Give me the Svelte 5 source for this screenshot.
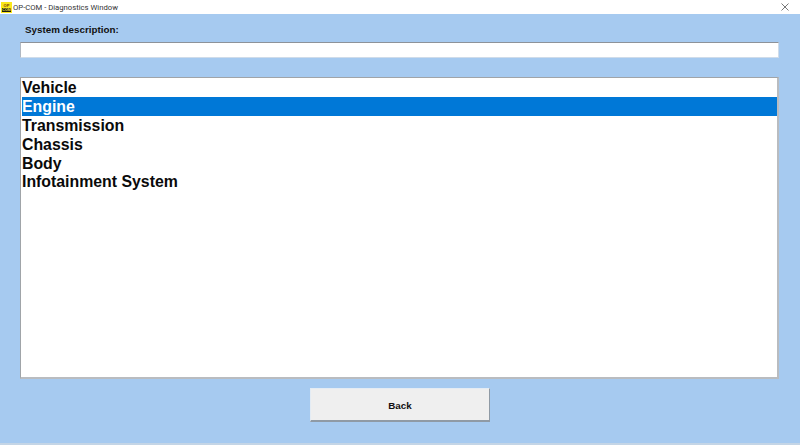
<script>
  let systems = ['Vehicle', 'Engine', 'Transmission', 'Chassis', 'Body', 'Infotainment System'];
  let selected = $state(1);
</script>

<div class="window">
  <header class="titlebar">
    <svg class="logo" width="11" height="11" viewBox="0 0 11 11">
      <rect width="11" height="11" fill="#fbe81a" />
      <rect x="1" y="6" width="9" height="4" fill="#1c1c10" />
      <text x="5.5" y="5" text-anchor="middle" class="logo-op">OP</text>
      <text x="5.5" y="9.4" text-anchor="middle" class="logo-com">COM</text>
    </svg>
    <span class="title">OP-COM - Diagnostics Window</span>
    <svg class="close" width="8" height="8" viewBox="0 0 8 8">
      <path d="M0.5 0.5 L7.5 7.5 M7.5 0.5 L0.5 7.5" stroke="#555" stroke-width="0.8" fill="none" />
    </svg>
  </header>

  <main class="content">
    <label class="desc-label" for="desc">System description:</label>
    <input id="desc" class="desc" type="text" />

    <ul class="list">
      {#each systems as name, i}
        <!-- svelte-ignore a11y_click_events_have_key_events, a11y_no_noninteractive_element_interactions -->
        <li class:selected={i === selected} onclick={() => (selected = i)}>{name}</li>
      {/each}
    </ul>

    <div class="actions">
      <button class="back">Back</button>
    </div>
  </main>
</div>

<style>
  :global(body) {
    margin: 0;
    background: #a6caf0;
  }
  .window {
    width: 800px;
    height: 445px;
    display: flex;
    flex-direction: column;
    overflow: hidden;
    font-family: "Liberation Sans", Arial, sans-serif;
  }
  .titlebar {
    height: 14px;
    flex: none;
    background: #fff;
    display: flex;
    align-items: center;
    padding: 0 11px 0 1px;
  }
  .logo {
    flex: none;
    margin-top: 1px;
  }
  .logo-op {
    font: bold 4px "Liberation Sans", sans-serif;
    fill: #7a3a10;
  }
  .logo-com {
    font: bold 3.6px "Liberation Sans", sans-serif;
    fill: #f0e040;
  }
  .title {
    margin-left: 1px;
    font: 7.7px Roboto, sans-serif;
    color: #333;
  }
  .close {
    margin-left: auto;
  }
  .content {
    flex: 1;
    display: flex;
    flex-direction: column;
    padding: 0 21px 0 20px;
    background: #a6caf0;
    border-bottom: 2px solid #c4d5e6;
  }
  .desc-label {
    margin: 9px 0 0 5px;
    height: 19px;
    line-height: 13px;
    font-size: 9.8px;
    font-weight: bold;
    color: #111;
  }
  .desc {
    box-sizing: border-box;
    width: 759px;
    height: 16px;
    margin: 0;
    padding: 0;
    background: #fff;
    border: 0;
    border-top: 1px solid #8d9299;
    border-left: 1px solid #b0b8c2;
    border-bottom: 1px solid #cfdcea;
    border-right: 1px solid #cfdcea;
    outline: none;
  }
  .list {
    box-sizing: border-box;
    width: 759px;
    height: 302px;
    margin: 19px 0 0;
    padding: 0 0 0 1px;
    list-style: none;
    background: #fff;
    border: 1px solid #a0a4a8;
    border-right: 2px solid #b9bcc0;
    border-bottom: 2px solid #b9bcc0;
  }
  .list li {
    box-sizing: border-box;
    height: 18.8px;
    padding-top: 1.4px;
    line-height: 18.8px;
    font-size: 15.85px;
    font-weight: bold;
    color: #0a0a0a;
  }
  .list li.selected {
    background: #0078d7;
    color: #fff;
  }
  .actions {
    display: flex;
    justify-content: center;
    margin-top: 9px;
  }
  .back {
    width: 180px;
    height: 34px;
    padding: 1px 0 0 1px;
    background: #efefef;
    border: 0;
    border-right: 1px solid #8f9aa5;
    border-bottom: 2px solid #8f9aa5;
    border-top: 1px solid #e4ecf4;
    border-left: 1px solid #e4ecf4;
    font: bold 9.8px "Liberation Sans", Arial, sans-serif;
    color: #111;
  }
</style>
